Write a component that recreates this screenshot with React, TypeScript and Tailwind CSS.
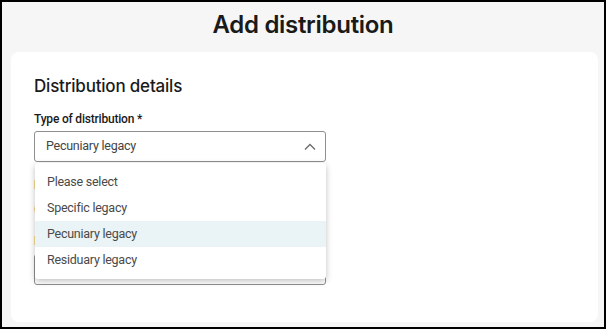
const OPTIONS = ["Please select", "Specific legacy", "Pecuniary legacy", "Residuary legacy"];

function ChevronUp() {
  return (
    <svg width="12" height="8" viewBox="0 0 12 8" fill="none" className="shrink-0">
      <polyline points="1,6.5 6,1.5 11,6.5" stroke="#6b6b6b" strokeWidth="1.3" />
    </svg>
  );
}

export default function App() {
  const selected = "Pecuniary legacy";
  return (
    <div className="w-[608px] h-[331px] bg-white font-['Inter',sans-serif] text-[#1a1a1a]">
      <div className="w-[606px] h-[329px] border-2 border-black bg-[#f6f6f6] flex flex-col">
        <h1 className="h-[44px] pt-[1px] leading-[44px] text-center text-[24px] font-semibold tracking-[-0.3px]">
          Add distribution
        </h1>

        <div className="ml-[9px] mr-[6px] mt-[6px] h-[270px] bg-white rounded-lg px-[23px] pt-[22px]">
          <h2 className="text-[17px] leading-[24px] font-medium tracking-[-0.2px]">
            Distribution details
          </h2>
          <p className="mt-[12px] font-['Roboto',sans-serif] text-[12px] leading-[18px] font-medium tracking-[-0.2px]">
            Type of distribution *
          </p>

          <div className="relative mt-[3px] w-[292px] font-['Roboto',sans-serif] tracking-[-0.25px]">
            <div className="h-[31px] border border-[#8f8f8f] rounded-[3px] flex items-center justify-between pl-[11px] pr-[9px]">
              <span className="text-[12.5px] text-[#444]">{selected}</span>
              <ChevronUp />
            </div>

            {/* content that sits under the open list */}
            <div className="pt-[14px]">
              <p className="text-[12px] leading-[18px] font-medium text-[#c0621a]">Legacy amount *</p>
              <p className="mt-[6px] text-[12px] leading-[18px] text-[#555]">(for example a fixed sum)</p>
              <p className="mt-[14px] text-[12px] leading-[18px] font-medium text-[#c0621a]">Beneficiary *</p>
              <div className="mt-[4px] h-[31px] border border-[#8f8f8f] rounded-[3px]" />
            </div>

            <ul className="absolute left-[1px] top-[32px] w-[291px] bg-white rounded-[3px] py-[6px] shadow-[0_2px_6px_rgba(0,0,0,0.25)]">
              {OPTIONS.map((o) => (
                <li
                  key={o}
                  className={`h-[26px] flex items-center pl-[12px] text-[12.5px] text-[#4a4a4a] ${
                    o === selected ? "bg-[#eaf3f5]" : ""
                  }`}
                >
                  {o}
                </li>
              ))}
            </ul>
          </div>
        </div>
      </div>
    </div>
  );
}
